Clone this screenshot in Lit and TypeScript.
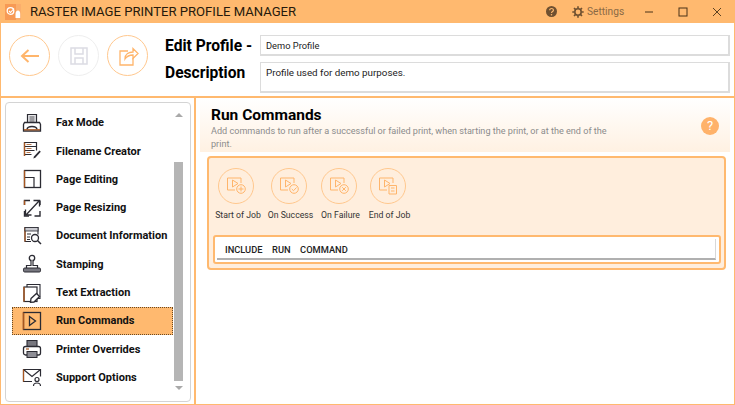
import { LitElement, html, css, svg } from 'lit';
import { customElement } from 'lit/decorators.js';

const ink = '#2b2b33';
const rust = '#a8561f';

// sidebar icons, all drawn on a 20x20 box
const navIcons: Record<string, unknown> = {
  fax: svg`<path d="M5.500 9V1.500h9V9" fill="#e8e8ea" stroke="${ink}" stroke-width="1.200"/><path d="M7.500 4h5M7.500 6h5M7.500 8h5" stroke="${ink}" stroke-width=".8"/><path d="M2.500 9.500h15l1 2v6.500h-17v-6.500z" fill="#fff" stroke="${ink}" stroke-width="1.300"/><path d="M5 16.500c.5-4 9.500-4 10 0" fill="none" stroke="${ink}" stroke-width="1.500"/><path d="M2 16.800h16" stroke="${rust}" stroke-width="1.300"/>`,
  file: svg`<path d="M2.500 15V1.500h12v8" fill="none" stroke="${ink}" stroke-width="1.200"/><path d="M2.500 5.500h12M2.500 9.500h10M2.500 13.500h7" stroke="${ink}" stroke-width="1"/><path d="M2.500 1.500V15" stroke="${rust}" stroke-width="1.300"/><path d="M4.500 3.500h5M4.500 7.500h5M4.500 11.500h4" stroke="${rust}" stroke-width=".8"/><path d="M12 15.500l5.500-6 1.300 1.200-5.500 6-2 .8z" fill="${ink}"/>`,
  page: svg`<rect x="2.500" y="1.500" width="16" height="17" fill="none" stroke="${ink}" stroke-width="1.300"/><path d="M2.500 8.500h9.500v10" fill="none" stroke="${ink}" stroke-width="1.200"/><path d="M2.500 1.500v17" stroke="${rust}" stroke-width="1.300"/>`,
  resize: svg`<path d="M2.500 7V2.500H8M12.500 18H18v-5M2.500 13v5H7M18 7V2.500" fill="none" stroke="${ink}" stroke-width="1.400"/><path d="M4 17L17 3M11.500 2.500H17.500V8.500M3.500 11.500V17H9.500" fill="none" stroke="${ink}" stroke-width="1.300"/><path d="M2.500 2.500V7" stroke="${rust}" stroke-width="1.400"/>`,
  doc: svg`<path d="M9 15.500H3V1.500h13v7" fill="none" stroke="${ink}" stroke-width="1.100"/><path d="M3 1.500V15.500" stroke="${rust}" stroke-width="1.200"/><rect x="3" y="1.500" width="13" height="3.500" fill="#c9c9cf" stroke="${ink}" stroke-width=".8"/><path d="M5 8h4M5 11h3M5 13.500h3" stroke="${ink}" stroke-width="1"/><circle cx="13" cy="12" r="3.500" fill="#fff" stroke="${ink}" stroke-width="1.300"/><path d="M15.500 14.500l3.500 3.500" stroke="${ink}" stroke-width="1.500"/>`,
  stamp: svg`<circle cx="10" cy="4" r="2.700" fill="#fff" stroke="${ink}" stroke-width="1.300"/><path d="M9 6.500v5H4.500v3h11v-3H11v-5" fill="#fff" stroke="${ink}" stroke-width="1.200"/><rect x="1.500" y="14" width="17" height="4" rx="1.200" fill="#77777f" stroke="${ink}" stroke-width="1"/>`,
  text: svg`<path d="M5 4.500V1.500h13v14h-3" fill="none" stroke="${ink}" stroke-width="1.100"/><rect x="2" y="4" width="13" height="14.500" fill="#fff" stroke="${ink}" stroke-width="1.200"/><path d="M2 4v14.500" stroke="${rust}" stroke-width="1.400"/><path d="M9 15.500l5.500-5 3 3-5.500 5.500-3.500.3z" fill="#fff" stroke="${ink}" stroke-width="1.300"/>`,
  run: svg`<rect x="1.500" y="1.500" width="17" height="17" fill="none" stroke="${ink}" stroke-width="1.300"/><path d="M1.500 1.500v17" stroke="${rust}" stroke-width="1.400"/><path d="M7.500 5.500v9l6-4.500z" fill="none" stroke="${ink}" stroke-width="1.300"/>`,
  printer: svg`<path d="M5 8V1.500h10V8" fill="#77777f" stroke="${ink}" stroke-width="1.100"/><rect x="1.500" y="7.500" width="17" height="8.500" rx="2" fill="#fff" stroke="${ink}" stroke-width="1.300"/><path d="M4 10h3" stroke="${rust}" stroke-width="1.200"/><rect x="5" y="12.500" width="10" height="6" fill="#8d8d95" stroke="${ink}" stroke-width="1"/>`,
  mail: svg`<path d="M10 14.500H1.500V2.500h17v7" fill="none" stroke="${ink}" stroke-width="1.200"/><path d="M1.500 2.500l8.500 7 8.500-7" fill="none" stroke="${ink}" stroke-width="1.200"/><path d="M1.500 2.500v12" stroke="${rust}" stroke-width="1.200"/><circle cx="15" cy="12.500" r="2" fill="#fff" stroke="${ink}" stroke-width="1.200"/><path d="M11.500 19c0-4 7-4 7 0" fill="none" stroke="${ink}" stroke-width="1.200"/>`,
};

const navItems = [
  ['fax', 'Fax Mode'],
  ['file', 'Filename Creator'],
  ['page', 'Page Editing'],
  ['resize', 'Page Resizing'],
  ['doc', 'Document Information'],
  ['stamp', 'Stamping'],
  ['text', 'Text Extraction'],
  ['run', 'Run Commands'],
  ['printer', 'Printer Overrides'],
  ['mail', 'Support Options'],
];

const c = '#ffb56b';
const badges: Record<string, unknown> = {
  plus: svg`<path d="M12.500 13h5M15 10.500v5" stroke="${c}"/>`,
  check: svg`<path d="M12.800 13l1.700 1.700 3-3.200" stroke="${c}"/>`,
  cross: svg`<path d="M13.200 11.200l3.600 3.600M16.800 11.200l-3.600 3.600" stroke="${c}"/>`,
};

const jobs = [
  ['plus', 'Start of Job', 50],
  ['check', 'On Success', 55],
  ['cross', 'On Failure', 45],
  ['end', 'End of Job', 53],
] as const;

@customElement('app-root')
export class AppRoot extends LitElement {
  static styles = css`
    :host {
      display: flex;
      flex-direction: column;
      width: 735px;
      height: 405px;
      box-sizing: border-box;
      overflow: hidden;
      background: #fff;
      font-family: Roboto, 'Open Sans', sans-serif;
      color: #000;
      border: 1px solid #ffb96f;
      border-top: 0;
    }
    .titlebar {
      flex: none;
      height: 23px;
      margin: 0 -1px;
      background: #ffb96f;
      display: flex;
      align-items: center;
    }
    .logo { margin-left: 5px; width: 16px; height: 16px; }
    .app-title { margin-left: 9px; font-size: 13.100px; color: #26190c; width: 512px; white-space: nowrap; }
    .tb-help { width: 11px; height: 11px; margin-left: 4px; }
    .gear { width: 12px; height: 12px; margin-left: 15px; }
    .settings { font-size: 10.200px; color: #8b6a45; margin-left: 3px; width: 40px; }
    .win { width: 34px; height: 23px; display: flex; align-items: center; justify-content: center; }
    .win svg { width: 10px; height: 10px; }

    .header {
      flex: none;
      height: 75px;
      box-sizing: border-box;
      border-bottom: 2px solid #ffb96f;
      display: flex;
      padding: 12px 4px 0 8px;
    }
    .round {
      flex: none;
      width: 41px;
      height: 41px;
      box-sizing: border-box;
      border: 1.500px solid #ffc88e;
      border-radius: 50%;
      margin-right: 8px;
      display: flex;
      align-items: center;
      justify-content: center;
    }
    .round.off { border-color: #eeeeee; }
    .round svg { width: 22px; height: 22px; }
    .labels {
      flex: none;
      width: 95px;
      margin: -2px 0 0 9px;
      font-size: 15.600px;
      font-weight: 700;
      line-height: 27px;
      white-space: nowrap;
    }
    .fields { flex: 1; display: flex; flex-direction: column; gap: 6px; }
    .field {
      box-sizing: border-box;
      border: 1px solid #dcdcdc;
      border-right-width: 2px;
      border-bottom-width: 2px;
      font-size: 9.800px;
      padding: 0 5px;
      color: #222;
    }
    .f1 { height: 21px; line-height: 19px; font-size: 9.300px; }
    .f2 { height: 31px; line-height: 16px; padding-top: 2px; }

    .body { flex: 1; display: flex; min-height: 0; }
    .side {
      flex: none;
      width: 195px;
      box-sizing: border-box;
      border-right: 2px solid #ffb96f;
      padding: 4px 3px 2px 4px;
    }
    .panel {
      height: 100%;
      box-sizing: border-box;
      border: 1px solid #d4d4d4;
      border-radius: 4px;
      display: flex;
      padding-left: 6px;
      padding-top: 5px;
    }
    .list { width: 161px; flex: none; padding-top: .6px; }
    .row {
      height: 28.300px;
      display: flex;
      align-items: center;
      box-sizing: border-box;
      padding-left: 10px;
      font-size: 11px;
      font-weight: 700;
      color: #111;
      white-space: nowrap;
    }
    .row svg { width: 20px; height: 20px; margin-right: 14px; flex: none; }
    .row.active {
      background: #ffb96f;
      outline: 1px dotted #6b4a22;
      outline-offset: -1px;
    }
    .scroll {
      flex: none;
      width: 9px;
      margin-left: 1px;
      display: flex;
      flex-direction: column;
      align-items: center;
    }
    .arrow { width: 0; height: 0; border-left: 4px solid transparent; border-right: 4px solid transparent; }
    .arrow.up { border-bottom: 4px solid #a9a9a9; margin-top: 5px; }
    .arrow.down { border-top: 4px solid #a9a9a9; margin-top: 5px; }
    .thumb { width: 9px; height: 219px; background: #b5b5b5; margin-top: 45px; }

    .main { flex: 1; min-width: 0; display: flex; flex-direction: column; }
    .banner {
      flex: none;
      height: 54px;
      box-sizing: border-box;
      margin: 0 4px 0 4px;
      background: linear-gradient(#ffffff, #fff1e2);
      padding: 8px 11px 0 11px;
      display: flex;
      justify-content: space-between;
    }
    .banner h1 { margin: 0; font-size: 15.500px; line-height: 19px; font-weight: 700; }
    .banner p { margin: 0; width: 400px; font-size: 9.100px; line-height: 12.500px; color: #8c8c8c; }
    .help {
      flex: none;
      width: 18px;
      height: 18px;
      margin-top: 11px;
      border-radius: 50%;
      background: #ffb26a;
      color: #fff;
      font-size: 13px;
      line-height: 18px;
      text-align: center;
    }
    .box {
      flex: none;
      height: 114px;
      box-sizing: border-box;
      margin: 4px 8px 0 11px;
      background: #ffeedd;
      border: 2px solid #ffb96f;
      border-radius: 4px;
      padding: 10px 3px 0 4px;
    }
    .jobs { display: flex; height: 67px; margin-left: -2px; }
    .job {
      flex: none;
      display: flex;
      flex-direction: column;
      align-items: center;
      font-size: 8.700px;
      color: #333;
      white-space: nowrap;
    }
    .job .circle {
      box-sizing: border-box;
      width: 36px;
      height: 36px;
      border: 1.500px solid #ffc88e;
      border-radius: 50%;
      display: flex;
      align-items: center;
      justify-content: center;
      margin-bottom: 6px;
    }
    .job .caption { margin-left: 4px; }
    .job svg { width: 20px; height: 20px; }
    .table {
      height: 29px;
      box-sizing: border-box;
      background: #fff;
      border: 2px solid #ffb96f;
      border-radius: 3px;
      padding: 2px 3px 0 2px;
    }
    .thead {
      height: 18px;
      padding-top: 1px;
      border-bottom: 2px solid #b0b0b0;
      border-right: 1px solid #d8d8d8;
      display: flex;
      gap: 9.500px;
      padding-left: 8px;
      font-size: 9.300px;
      font-weight: 500;
      line-height: 19px;
      color: #222;
    }
  `;

  private navIcon(name: string) {
    return html`<svg viewBox="0 0 20 20">${navIcons[name]}</svg>`;
  }

  private jobIcon(kind: string) {
    return html`<svg viewBox="0 0 20 20" fill="none">
      <path d="M9 14H1.500V2H15v5" stroke="${c}"/>
      <path d="M6.500 4v7l5.500-3.500z" stroke="${c}"/>
      ${kind === 'end'
        ? svg`<path d="M11 9.500h7.500V18H11zM13 12h3.500M13 15h3.500" stroke="${c}"/>`
        : svg`<circle cx="15" cy="13" r="4.300" stroke="${c}"/>${badges[kind]}`}
    </svg>`;
  }

  render() {
    return html`
      <div class="titlebar">
        <svg class="logo" viewBox="0 0 16 16">
          <rect width="11" height="16" fill="#f79a55"/>
          <rect x="11" width="5" height="16" fill="#fbae6c"/>
          <circle cx="5.500" cy="7" r="3.300" fill="none" stroke="#fff" stroke-width="1.300"/>
          <path d="M4 7l1.500 1.500 3.500-4" fill="none" stroke="#fff" stroke-width="1.100"/>
          <path d="M10.500 10c0-2 1-3.500 2.500-3.500s2.200 1.500 2.200 3.500v4h-4.700z" fill="#fff"/>
        </svg>
        <div class="app-title">RASTER IMAGE PRINTER PROFILE MANAGER</div>
        <svg class="tb-help" viewBox="0 0 11 11">
          <circle cx="5.500" cy="5.500" r="5.500" fill="#6f5030"/>
          <path d="M3.700 4.200c0-2.300 3.700-2.300 3.700 0 0 1.400-1.900 1.300-1.900 2.800" fill="none" stroke="#ffb96f" stroke-width="1.200"/>
          <circle cx="5.500" cy="8.800" r=".8" fill="#ffb96f"/>
        </svg>
        <svg class="gear" viewBox="0 0 12 12">
          <circle cx="6" cy="6" r="3.200" fill="none" stroke="#6f5030" stroke-width="1.600"/>
          <path d="M6 .3v2M6 9.700v2M.3 6h2M9.700 6h2M2 2l1.400 1.400M8.600 8.600L10 10M10 2L8.600 3.400M3.400 8.600L2 10" stroke="#6f5030" stroke-width="1.600"/>
        </svg>
        <div class="settings">Settings</div>
        <div class="win" style="margin-left:5px"><svg viewBox="0 0 10 10"><path d="M1 5h8" stroke="#4a3318" stroke-width="1"/></svg></div>
        <div class="win"><svg viewBox="0 0 10 10"><rect x="1" y="1" width="8" height="8" fill="none" stroke="#4a3318" stroke-width="1"/></svg></div>
        <div class="win"><svg viewBox="0 0 10 10"><path d="M1 1l8 8M9 1l-8 8" stroke="#4a3318" stroke-width=".9"/></svg></div>
      </div>

      <div class="header">
        <div class="round">
          <svg viewBox="0 0 22 22"><path d="M20 11H3M9.500 5l-6.500 6 6.500 6" fill="none" stroke="#ffb56b" stroke-width="2"/></svg>
        </div>
        <div class="round off">
          <svg viewBox="0 0 22 22" fill="none" stroke="#dcdce4" stroke-width="1.500"><path d="M3 3h16v16H3z"/><path d="M7 3v6h8V3M7 19v-6h8v6"/></svg>
        </div>
        <div class="round">
          <svg viewBox="0 0 22 22" fill="none" stroke="#ffb56b" stroke-width="1.300"><path d="M11 6H3v14h13v-7"/><path d="M8 14c0-5 4-7 8-7V3.500l5 5-5 5V10c-3 0-6 1-8 4z"/></svg>
        </div>
        <div class="labels"><div>Edit Profile -</div><div>Description</div></div>
        <div class="fields">
          <div class="field f1">Demo Profile</div>
          <div class="field f2">Profile used for demo purposes.</div>
        </div>
      </div>

      <div class="body">
        <div class="side">
          <div class="panel">
            <div class="list">
              ${navItems.map(
                ([icon, label]) => html`<div class="row ${label === 'Run Commands' ? 'active' : ''}">${this.navIcon(icon)}${label}</div>`
              )}
            </div>
            <div class="scroll">
              <div class="arrow up"></div>
              <div class="thumb"></div>
              <div class="arrow down"></div>
            </div>
          </div>
        </div>
        <div class="main">
          <div class="banner">
            <div>
              <h1>Run Commands</h1>
              <p>Add commands to run after a successful or failed print, when starting the print, or at the end of the print.</p>
            </div>
            <div class="help">?</div>
          </div>
          <div class="box">
            <div class="jobs">
              ${jobs.map(([kind, label, w]) => html`<div class="job" style="width:${w}px">
                <div class="circle">${this.jobIcon(kind)}</div><span class="caption">${label}</span>
              </div>`)}
            </div>
            <div class="table">
              <div class="thead"><span>INCLUDE</span><span>RUN</span><span>COMMAND</span></div>
            </div>
          </div>
        </div>
      </div>
    `;
  }
}
